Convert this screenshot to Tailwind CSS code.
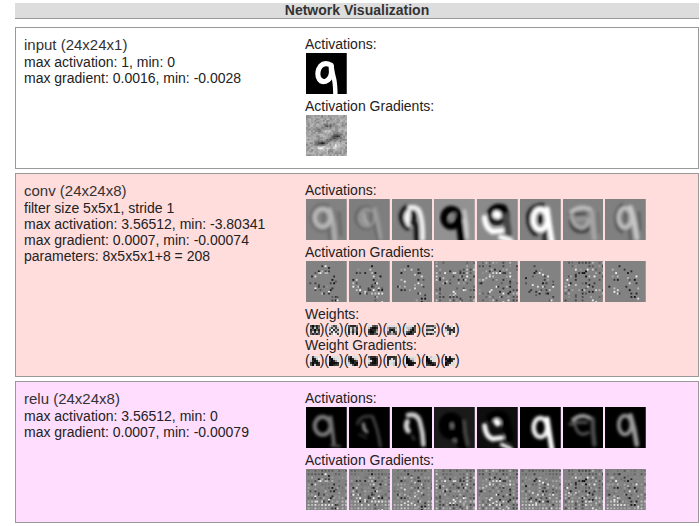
<!DOCTYPE html>
<html lang="en">
<head>
<meta charset="utf-8">
<title>Network Visualization</title>
<script src="https://cdn.jsdelivr.net/npm/@tailwindcss/browser@4"></script>
</head>
<body class="bg-white font-['Liberation_Sans',Arial,sans-serif] text-sm leading-4 text-[#222]">
<svg class="absolute size-0" aria-hidden="true">
  <defs>
    <filter id="soft" x="-20%" y="-20%" width="140%" height="140%"><feGaussianBlur stdDeviation=".9"/></filter>
    <filter id="edge" x="-20%" y="-20%" width="140%" height="140%"><feGaussianBlur stdDeviation=".35"/></filter>
  </defs>
</svg>
<main class="pt-[3px] pr-px pb-[3px] pl-[15px]">
  <h1 class="mb-2 border-b border-[#999] bg-[#ddd] text-center leading-[15px] font-bold text-[#333]">Network Visualization</h1>
  <div class="flex flex-col gap-1">
    <section class="grid grid-cols-[281px_1fr] border border-[#999] p-2">
      <div>
        <h2 class="text-[15px] leading-[18px] text-[#333]">input (24x24x1)</h2>
        <p>max activation: 1, min: 0</p>
        <p>max gradient: 0.0016, min: -0.0028</p>
      </div>
      <div>
        <h3>Activations:</h3>
        <div class="mt-px mb-1 ml-px grid w-[340px] grid-cols-8 gap-[2px]" data-maps="input"></div>
        <h3>Activation Gradients:</h3>
        <div class="mt-px mb-1 ml-px grid w-[340px] grid-cols-8 gap-[2px]" data-maps="noise"></div>
      </div>
    </section>
    <section class="grid grid-cols-[281px_1fr] border border-[#999] bg-[#fdd] p-2">
      <div>
        <h2 class="text-[15px] leading-[18px] text-[#333]">conv (24x24x8)</h2>
        <p>filter size 5x5x1, stride 1</p>
        <p>max activation: 3.56512, min: -3.80341</p>
        <p>max gradient: 0.0007, min: -0.00074</p>
        <p>parameters: 8x5x5x1+8 = 208</p>
      </div>
      <div>
        <h3>Activations:</h3>
        <div class="mt-px mb-1 ml-px grid w-[340px] grid-cols-8 gap-[2px]" data-maps="conv"></div>
        <h3>Activation Gradients:</h3>
        <div class="mt-px mb-1 ml-px grid w-[340px] grid-cols-8 gap-[2px]" data-maps="sparse"></div>
        <h3>Weights:</h3>
        <div class="flex leading-[15px]" data-kernels="weights"></div>
        <h3>Weight Gradients:</h3>
        <div class="flex leading-[15px]" data-kernels="grads"></div>
      </div>
    </section>
    <section class="grid grid-cols-[281px_1fr] border border-[#999] bg-[#fdf] p-2">
      <div>
        <h2 class="text-[15px] leading-[18px] text-[#333]">relu (24x24x8)</h2>
        <p>max activation: 3.56512, min: 0</p>
        <p>max gradient: 0.0007, min: -0.00079</p>
      </div>
      <div>
        <h3>Activations:</h3>
        <div class="mt-px mb-1 ml-px grid w-[340px] grid-cols-8 gap-[2px]" data-maps="relu"></div>
        <h3>Activation Gradients:</h3>
        <div class="mt-px mb-1 ml-px grid w-[340px] grid-cols-8 gap-[2px]" data-maps="dense"></div>
      </div>
    </section>
  </div>
</main>
<script>
// Small seeded generator so that the maps are the same on each load.
function rng(seed) {
  return () => {
    seed = (seed * 1664525 + 1013904223) % 4294967296;
    return seed / 4294967296;
  };
}
const gray = v => { v = Math.max(0, Math.min(255, Math.round(v))); return `rgb(${v},${v},${v})`; };
const cell = (x, y, v, s = 1) => `<rect x="${x}" y="${y}" width="${s}" height="${s}" fill="${gray(v)}"/>`;
const map = (bg, body, filter) => `<svg class="h-[41px] w-full" viewBox="0 0 24 24" preserveAspectRatio="none" aria-hidden="true"><rect width="24" height="24" fill="${gray(bg)}"/><g fill="none" stroke-linecap="round" stroke-linejoin="round"${filter ? ` filter="url(#${filter})"` : ''}>${body}</g></svg>`;
// A stroke layer: gray level, width, path.
const layers = list => list.map(([v, w, d]) => `<path stroke="${gray(v)}" stroke-width="${w}" d="${d}"/>`).join('');
const ring = (cx, cy, rx, ry) => `M${cx - rx} ${cy}a${rx} ${ry} 0 1 1 ${2 * rx} 0a${rx} ${ry} 0 1 1 ${-2 * rx} 0`;

const input = [map(0, layers([
  [255, 3, 'M14.8 7.2Q11 5 8.6 7.6Q6.4 10.5 7.2 14Q8.5 17.5 11.5 16.6Q14.5 15.5 15 11.5Z'],
  [255, 2.6, 'M15 7.5Q15.6 12 16.6 15.5Q17.3 19 17.3 25']
]), 'edge')];

const conv = [
  [130, [[112, 2, ring(9.8, 11, 7, 7.8)], [106, 2, 'M19.5 8Q20 14 20.5 21M13.5 17L14 24'], [174, 2.6, 'M14 6Q16 11 17 24'], [184, 2.6, ring(9.8, 11, 4.6, 5.2)], [108, 1.8, 'M10.5 8.5L10.5 13']]],
  [126, [[98, 1.4, ring(10, 11, 6, 6.4)], [152, 2, ring(10.5, 11, 4.2, 5)], [100, 1.5, 'M13 8Q14 11 12.5 14'], [170, 2, 'M9 9Q8.5 13 11 14'], [156, 2.4, 'M15 6Q17 12 18.5 23'], [98, 1.4, 'M15 15L17 24']]],
  [130, [[25, 3, 'M12 4.5Q7 4 5.5 9Q5 14 9 17M14.2 15L14.6 25'], [245, 3.4, 'M10.2 7.5Q7.6 11 10 14.5'], [25, 3.2, 'M12.5 8Q13.5 12 12 14'], [240, 2.8, 'M10.5 4.8Q16 4 17 10Q18.3 16 18 23.5']]],
  [146, [[200, 2, 'M18 7Q19.5 15 19.5 23'], [0, 4.2, 'M14.5 10Q15.5 18 16.2 24'], [0, 4.3, ring(10.2, 11, 4.4, 4.9)], [125, 2.4, 'M9.5 12.5L11.8 9'], [215, 1.4, 'M17.7 12Q18.6 18 19 22']]],
  [138, [[0, 4.5, 'M8.5 7.5Q11 4 15.5 5.5L17 9.5'], [70, 4, 'M17 10L18.5 20'], [30, 3.5, 'M7 11Q10 15 14 13'], [255, 4.6, 'M11.5 9L12 9.3'], [255, 3.2, 'M4.5 11Q5 17 9 19L14.5 18.5'], [250, 3, 'M14 22.5Q17 23 20 24.5']]],
  [128, [[35, 3.5, 'M13 4Q5.5 5 5.2 11Q5.5 17 9 20'], [50, 3, 'M14.8 18L14.5 25'], [255, 3.2, ring(11.9, 12, 4.2, 6)], [25, 2.8, 'M12 10L12 13.5'], [255, 3.2, 'M16 6Q17 14 18.8 25']]],
  [130, [[65, 2.2, 'M4.5 12Q5 19 11 19Q14 19 15 17'], [100, 2, 'M3.5 9L8 8'], [190, 2.4, 'M5 7.5Q10 3.5 16 6'], [168, 2.2, 'M5 10Q6 16 11 17Q15 16 15 12'], [80, 1.8, 'M8 9L13 8.5'], [152, 2, 'M8 12L13 11.5'], [164, 3, 'M17 8Q17.5 16 18.5 23'], [108, 1.2, 'M20.5 8L21 20']]],
  [128, [[84, 2, 'M10 3.5Q6 7 6.5 13Q7 18 10 19'], [98, 2, 'M14.5 18L15 24M20 8L20.5 18'], [192, 2.4, ring(11.8, 11, 3.8, 5.7)], [98, 2, 'M12 8.5L12 13'], [198, 3, 'M15 5Q17.5 13 18.7 23']]]
].map(([bg, l]) => map(bg, layers(l), 'soft'));

const relu = [
  [0, [[125, 2.4, ring(9.8, 11, 4.7, 5.2)], [115, 2, 'M14.5 6Q15.5 12 16.5 22.5'], [80, 1.4, 'M15 22.5L20 23']]],
  [0, [[60, 1.5, 'M5 10Q6 4.5 14 5.5'], [150, 1.8, 'M8.5 10L9 13M9 13L10.5 14.5'], [75, 1.5, 'M14 6Q17 13 18.5 23'], [45, 1.2, 'M6 16L10 18']]],
  [0, [[215, 3, 'M9 8.5Q7.6 11.5 9.5 14'], [205, 2.8, 'M9.5 4.8Q15 3.5 16.5 9Q18.3 15 18.5 22'], [75, 1.2, 'M12 17L13 19']]],
  [26, [[0, 6, ring(10, 11, 4.3, 5)], [0, 6, 'M10 11L12 13M14 9L16.5 22'], [125, 1.6, 'M10.5 10L10.7 12M12 20L12.3 19.5'], [85, 1.4, 'M18 8Q18 15 20 22']]],
  [14, [[0, 5, 'M8 6Q15 2 17 8L19 18'], [255, 3.8, 'M11.6 8.7L12.2 9.4'], [245, 3, 'M4.5 11Q5 17 9 18.7L14.5 18'], [240, 2.2, 'M14.5 22Q17 23 20 24.5']]],
  [0, [[240, 2.7, ring(12, 12, 4, 5.6)], [255, 3, 'M16 7Q17 14 18.8 25']]],
  [0, [[165, 2.2, 'M6 7.5Q11 3.5 16 6.5'], [90, 1.6, 'M4 10L7 10Q8 16 12 16L15 15M6 9L14 9'], [80, 2.6, 'M17.5 7Q17.5 15 18.5 22']]],
  [0, [[150, 2.2, ring(11.8, 10.5, 3.7, 5.5)], [155, 2.8, 'M15 5Q17.5 13 18.7 22']]]
].map(([bg, l]) => map(bg, layers(l), 'soft'));

function noise() {
  const r = rng(77);
  const spots = [[17.5, 12, 2.6, 1.7, -115], [14, 14, 2.4, 1.2, -60], [8.5, 16, 3.2, 1.1, -110], [13, 6, 3, 1.2, -60], [8, 8.5, 1.5, 1.5, -50], [9, 18.7, 3.5, 1.1, 75], [17, 18, 1.5, 2, 60], [12, 9.5, 3, 1.2, 35], [12, 12, 2, 1.5, 25]];
  let out = '';
  for (let y = 0; y < 24; y++) for (let x = 0; x < 24; x++) {
    let v = 160 + (r() - .5) * 60;
    for (const [sx, sy, rx, ry, a] of spots) v += a * Math.exp(-(((x - sx) / rx) ** 2 + ((y - sy) / ry) ** 2));
    out += cell(x, y, v, 1.2);
  }
  return [map(160, out, 'edge')];
}

// Pooled gradients: one live cell at most in each 2x2 block.
function dots(seed, dense, wide) {
  const r = rng(seed);
  let out = '';
  for (let j = 0; j < 12; j++) for (let i = 0; i < 12; i++) {
    const x = 2 * i + 1, y = 2 * j + .5;
    const onRing = Math.abs(Math.hypot((x - 10.5) / 5.5, (y - 11) / 6) - 1) < .5;
    const onStem = x > 14 && x < 21 && y > 8;
    const near = onRing || onStem;
    const k = r(), a = r(), b = r();
    const jx = near && b < .35 ? -1 : 0, jy = near && b > .7 ? 1 : 0;
    let v;
    if (near && k < .55) v = a < .55 ? 15 + a * 140 : 150 + (a - .55) * 220;
    else if (wide && k < .55 && (!onRing)) v = a < .5 ? 60 + a * 90 : 145 + (a - .5) * 130;
    else if (dense) v = j < 2 ? 80 + a * 60 : j > 8 ? 145 + a * 60 : 95 + a * 85;
    else continue;
    if (dense && (j === 9 || j === 10) && i > 1 && i < 8 && a > .5) v = 225;
    out += cell(x + jx, y + jy, v, 1.1);
  }
  return map(130, out);
}
const wideMaps = [3, 4, 6];
const maps = {
  input, conv, relu, noise: noise(),
  sparse: Array.from({ length: 8 }, (_, i) => dots(101 + i * 7919977, false, wideMaps.includes(i))),
  dense: Array.from({ length: 8 }, (_, i) => dots(101 + i * 7919977, true, wideMaps.includes(i)))
};
document.querySelectorAll('[data-maps]').forEach(el => { el.innerHTML = maps[el.dataset.maps].join(''); });

// 5x5 filters, one digit per cell from 0 (black) to 9 (white).
const kernels = {
  weights: ['20313 41714 13031 27172 31313', '86238 62727 39162 72827 26982', '31114 27371 18262 17161 28380', '88323 72001 20114 10026 31132', '88888 63436 71017 32713 24642', '88882 77613 86203 32022 10129', '22226 67873 22219 68884 13138', '82889 22381 72112 88261 97289'],
  grads: ['82788 80179 71017 20101 30711', '08888 10788 10158 00001 00122', '31888 10178 30013 71010 88301', '31113 71001 88101 71001 21112', '11112 12822 18882 18871 28871', '18888 01778 00158 00001 70018', '08788 01888 00288 10012 22101', '18188 01012 20018 01188 02888']
};
const kernel = rows => `<span class="flex items-center">(<svg class="size-[10px]" viewBox="0 0 5 5" aria-hidden="true"><g filter="url(#edge)">${rows.split(' ').map((row, y) => [...row].map((c, x) => cell(x, y, 15 + c * 26, 1)).join('')).join('')}</g></svg>)</span>`;
document.querySelectorAll('[data-kernels]').forEach(el => { el.innerHTML = kernels[el.dataset.kernels].map(kernel).join(''); });
</script>
</body>
</html>
